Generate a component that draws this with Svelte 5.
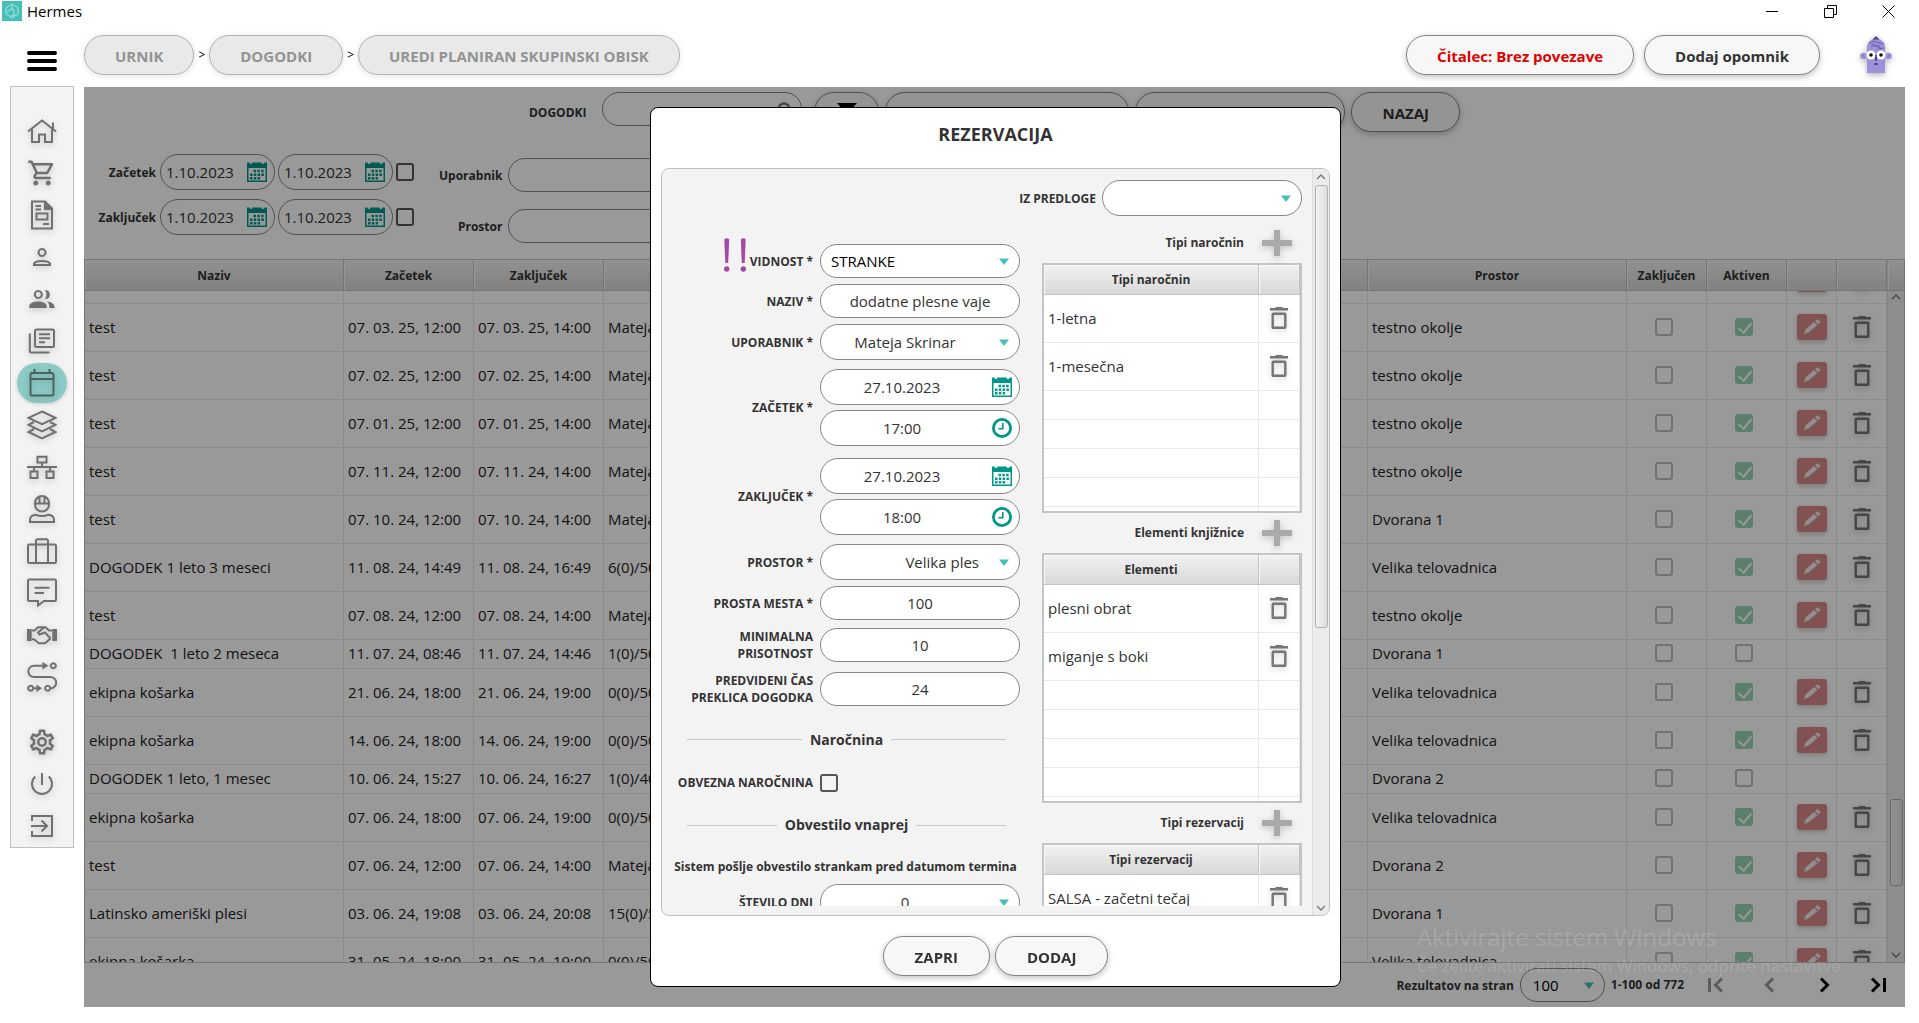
<script lang="ts">
	import { onMount } from 'svelte';

	type Icon = {
		label: string,
		box?: number,
		stroke?: string,
		fill?: string,
		active?: boolean,
		gap?: boolean,
	}

	const menu: Icon[] = [
		{ label: 'Domov', stroke: 'M1 15.5L15 4.5L29 15.5M5 13.5V26H12V18.5H18V26H25V13.5M26 12.5V6.5' },
		{ label: 'Blagajna', box: 24, fill: 'M15.55 13c.75 0 1.41-.41 1.75-1.03l3.58-6.49A.996.996 0 0 0 20.01 4H5.21l-.94-2H1v2h2l3.6 7.59-1.35 2.44C4.52 15.37 5.48 17 7 17h12v-2H7l1.1-2h7.45zM6.16 6h12.15l-2.76 5H8.53L6.16 6zM7 18c-1.1 0-1.99.9-1.99 2S5.9 22 7 22s2-.9 2-2-.9-2-2-2zm10 0c-1.1 0-1.99.9-1.99 2s.89 2 1.99 2 2-.9 2-2-.9-2-2-2z' },
		{ label: 'Dokumenti', stroke: 'M5 1.5H18L25 8.5V28.5H5ZM9.500 13.500H20.500V19.500H9.500ZM8.500 6H14M8.500 9.500H14M16 24H22', fill: 'M17 1L26 10H17Z' },
		{ label: 'Oseba', stroke: 'M15 7a3.500 3.500 0 1 0 .01 0M7 23V21.500C9 18 21 18 23 21.500V23Z' },
		{ label: 'Stranke', stroke: 'M11.300 7a3.500 3.500 0 1 0 .01 0', fill: 'M2.300 24V21.500C4 16 18 16 19.700 21.500V24ZM18 6C24.500 5 24.500 16 18 15C20 12 20 9 18 6ZM20 17.500C24 18 27.700 19.500 27.700 24H22.500C22.500 21 22 19 20 17.500Z' },
		{ label: 'Knjižnica', stroke: 'M9.500 3.500H25.500A1.500 1.500 0 0 1 27 5V19.500A1.500 1.500 0 0 1 25.500 21H9.500A1.500 1.500 0 0 1 8 19.500V5A1.500 1.500 0 0 1 9.500 3.500ZM2.800 7.500V24.500A1.500 1.500 0 0 0 4.300 26.500H22.500M12 8.300H23M12 12.300H23M12 16.300H18' },
		{ label: 'Urnik', active: true, stroke: 'M5 5H25A1.500 1.500 0 0 1 26.500 6.500V26A1.500 1.500 0 0 1 25 27.500H5A1.500 1.500 0 0 1 3.500 26V6.500A1.500 1.500 0 0 1 5 5ZM3.500 11H26.500M7.500 1V6M22.500 1V6' },
		{ label: 'Sloji', stroke: 'M15 1.500L28.500 7.800L15 14.200L1.500 7.800ZM7 12L1.500 14.800L15 21.300L28.500 14.800L23 12M7 19L1.500 22L15 28.500L28.500 22L23 19' },
		{ label: 'Struktura', stroke: 'M10.500 4.800H19.500V10.500H10.500ZM15 10.500V15M0 15H30M7 15V19M23 15V19M3.500 19.500H10.500V26H3.500ZM19.500 19.500H26.500V26H19.500Z' },
		{ label: 'Zaposleni', stroke: 'M15 2A7 7 0 0 1 22 9V10.500A7 7 0 0 1 8 10.500V9A7 7 0 0 1 15 2ZM7 9.500H23M12.500 2.500V9M17.500 2.500V9M3 28V26C3 22.500 6 21 9 20.800C12 22.300 18 22.300 21 20.800C24 21 27 22.500 27 26V28Z' },
		{ label: 'Oprema', stroke: 'M2.500 8.500H27.500A1.300 1.300 0 0 1 29 10V25.500A1.500 1.500 0 0 1 27.500 27H2.500A1.500 1.500 0 0 1 1 25.500V10A1.300 1.300 0 0 1 2.500 8.500ZM9 27V5A1.500 1.500 0 0 1 10.500 3.300H19.500A1.500 1.500 0 0 1 21 5V27' },
		{ label: 'Sporočila', stroke: 'M2.500 1.500H27.500A1.300 1.300 0 0 1 29 3V21.500A1.500 1.500 0 0 1 27.500 23H17L11 27.500V23H2.500A1.500 1.500 0 0 1 1 21.500V3A1.300 1.300 0 0 1 2.500 1.500ZM7.500 9.800H22.500M7.500 15H17' },
		{ label: 'Partnerji', stroke: 'M5 10.500H7.500L11 7.300H18.500L22 10.500H25M5 19.300H7L12 23.300H18L23.500 18.500M17 7.500L11 12.500L12.500 14.500L18 12.500L23.500 18.500', fill: 'M0 9H4.700V21H0ZM25.300 9H30V21H25.300Z' },
		{ label: 'Procesi', stroke: 'M17 3.700H7A5.600 5.600 0 0 0 7 15H23A5.600 5.600 0 0 1 24 26.300M26.300 1.200a2.500 2.500 0 1 0 .01 0M3.700 23.800a2.500 2.500 0 1 0 .01 0M20.700 23.800a2.500 2.500 0 1 0 .01 0M6 26.300H11', fill: 'M15.500 0L21.500 3.700L15.500 7.400ZM9.500 22.600L15 26.300L9.500 30Z' },
		{ label: 'Nastavitve', gap: true, box: 24, fill: 'M12,8A4,4 0 0,1 16,12A4,4 0 0,1 12,16A4,4 0 0,1 8,12A4,4 0 0,1 12,8M12,10A2,2 0 0,0 10,12A2,2 0 0,0 12,14A2,2 0 0,0 14,12A2,2 0 0,0 12,10M10,22C9.75,22 9.54,21.82 9.5,21.58L9.13,18.93C8.5,18.68 7.96,18.34 7.44,17.94L4.95,18.95C4.73,19.03 4.46,18.95 4.34,18.73L2.34,15.27C2.21,15.05 2.27,14.78 2.46,14.63L4.57,12.97L4.5,12L4.57,11L2.46,9.37C2.27,9.22 2.21,8.95 2.34,8.73L4.34,5.27C4.46,5.05 4.73,4.96 4.95,5.05L7.44,6.05C7.96,5.66 8.5,5.32 9.13,5.07L9.5,2.42C9.54,2.18 9.75,2 10,2H14C14.25,2 14.46,2.18 14.5,2.42L14.87,5.07C15.5,5.32 16.04,5.66 16.56,6.05L19.05,5.05C19.27,4.96 19.54,5.05 19.66,5.27L21.66,8.73C21.79,8.95 21.73,9.22 21.54,9.37L19.43,11L19.5,12L19.43,13L21.54,14.63C21.73,14.78 21.79,15.05 21.66,15.27L19.66,18.73C19.54,18.95 19.27,19.04 19.05,18.95L16.56,17.95C16.04,18.34 15.5,18.68 14.87,18.93L14.5,21.58C14.46,21.82 14.25,22 14,22H10M11.25,4L10.88,6.61C9.68,6.86 8.62,7.5 7.85,8.39L5.44,7.35L4.69,8.65L6.8,10.2C6.4,11.37 6.4,12.64 6.8,13.8L4.68,15.36L5.43,16.66L7.86,15.62C8.63,16.5 9.68,17.14 10.87,17.38L11.24,20H12.76L13.13,17.39C14.32,17.14 15.37,16.5 16.14,15.62L18.57,16.66L19.32,15.36L17.2,13.81C17.6,12.64 17.6,11.37 17.2,10.2L19.31,8.65L18.56,7.35L16.15,8.39C15.38,7.5 14.32,6.86 13.12,6.62L12.75,4H11.25Z' },
		{ label: 'Izklop', stroke: 'M8.300 7.500A10 10 0 1 0 21.700 7.500M15 4V16' },
		{ label: 'Odjava', stroke: 'M5 10V5H25V25H5V20M4 15H19.500M14.500 9.500L20 15L14.500 20.500' },
	]

	const crumbs = ['URNIK', 'DOGODKI', 'UREDI PLANIRAN SKUPINSKI OBISK']

	/** name, start, end, attendees, room, can be edited */
	type Event = [string, string, string, string, string, boolean]

	const events: Event[] = [
		['test', '07. 04. 25, 12:00', '07. 04. 25, 14:00', 'Mateja Skrinar', 'testno okolje', true],
		['test', '07. 03. 25, 12:00', '07. 03. 25, 14:00', 'Mateja Skrinar', 'testno okolje', true],
		['test', '07. 02. 25, 12:00', '07. 02. 25, 14:00', 'Mateja Skrinar', 'testno okolje', true],
		['test', '07. 01. 25, 12:00', '07. 01. 25, 14:00', 'Mateja Skrinar', 'testno okolje', true],
		['test', '07. 11. 24, 12:00', '07. 11. 24, 14:00', 'Mateja Skrinar', 'testno okolje', true],
		['test', '07. 10. 24, 12:00', '07. 10. 24, 14:00', 'Mateja Skrinar', 'Dvorana 1', true],
		['DOGODEK 1 leto 3 meseci', '11. 08. 24, 14:49', '11. 08. 24, 16:49', '6(0)/50', 'Velika telovadnica', true],
		['test', '07. 08. 24, 12:00', '07. 08. 24, 14:00', 'Mateja Skrinar', 'testno okolje', true],
		['DOGODEK  1 leto 2 meseca', '11. 07. 24, 08:46', '11. 07. 24, 14:46', '1(0)/50', 'Dvorana 1', false],
		['ekipna košarka', '21. 06. 24, 18:00', '21. 06. 24, 19:00', '0(0)/50', 'Velika telovadnica', true],
		['ekipna košarka', '14. 06. 24, 18:00', '14. 06. 24, 19:00', '0(0)/50', 'Velika telovadnica', true],
		['DOGODEK 1 leto, 1 mesec', '10. 06. 24, 15:27', '10. 06. 24, 16:27', '1(0)/40', 'Dvorana 2', false],
		['ekipna košarka', '07. 06. 24, 18:00', '07. 06. 24, 19:00', '0(0)/50', 'Velika telovadnica', true],
		['test', '07. 06. 24, 12:00', '07. 06. 24, 14:00', 'Mateja Skrinar', 'Dvorana 2', true],
		['Latinsko ameriški plesi', '03. 06. 24, 19:08', '03. 06. 24, 20:08', '15(0)/50', 'Dvorana 1', true],
		['ekipna košarka', '31. 05. 24, 18:00', '31. 05. 24, 19:00', '0(0)/50', 'Velika telovadnica', true],
	]

	const lists = [
		{ title: 'Tipi naročnin', head: 'Tipi naročnin', items: ['1-letna', '1-mesečna'] },
		{ title: 'Elementi knjižnice', head: 'Elementi', items: ['plesni obrat', 'miganje s boki'] },
		{ title: 'Tipi rezervacij', head: 'Tipi rezervacij', items: ['SALSA - začetni tečaj'] },
	]

	const filters = [
		{ label: 'Začetek', id: 'start' },
		{ label: 'Zaključek', id: 'end' },
	]

	const terms = [
		{ label: 'ZAČETEK *', id: 'term-start', date: '27.10.2023', time: '17:00' },
		{ label: 'ZAKLJUČEK *', id: 'term-end', date: '27.10.2023', time: '18:00' },
	]

	let eventList: HTMLDivElement

	// the list opens scrolled part of the way into its first row
	onMount(() => (eventList.scrollTop = 35))
</script>

{#snippet trash()}
	<svg class="trash" width="18" height="22" viewBox="0 0 18 22">
		<path d="M5.500 0H12.500V1H18V3.500H0V1H5.500Z" fill="currentColor" />
		<rect x="2.700" y="6.700" width="12.600" height="14" rx="0.500" fill="none" stroke="currentColor" stroke-width="2.400" />
	</svg>
{/snippet}

{#snippet calendar()}
	<svg class="fieldIcon" width="20" height="20" viewBox="0 0 20 20">
		<path d="M0 0.500H2.500A1.500 1.500 0 0 0 5.500 0.500H14.500A1.500 1.500 0 0 0 17.500 0.500H20V20H0ZM1.500 6V18.500H18.500V6Z" fill="#009688" fill-rule="evenodd" />
		<path d="M6.500 9H17.500M3 12.700H17.500M3 16.300H14" stroke="#009688" stroke-width="2.400" stroke-dasharray="2.500 1.300" />
	</svg>
{/snippet}

{#snippet clock()}
	<svg class="fieldIcon" width="20" height="20" viewBox="0 0 20 20">
		<circle cx="10" cy="10" r="8.600" fill="#fff" stroke="#009688" stroke-width="2.800" />
		<path d="M10.800 5V10.800H6.500" fill="none" stroke="#009688" stroke-width="1.600" />
	</svg>
{/snippet}

{#snippet arrow()}
	<svg class="arrow" width="10" height="7" viewBox="0 0 10 7">
		<path d="M0 0.500H10L5 7Z" fill="#45bfb9" />
	</svg>
{/snippet}

{#snippet chevron(down: boolean)}
	<svg width="10" height="6" viewBox="0 0 10 6">
		<path d={down ? 'M1 1L5 5L9 1' : 'M1 5L5 1L9 5'} fill="none" stroke="#777" stroke-width="1.400" />
	</svg>
{/snippet}

<div class="window">
	<div class="titlebar">
		<svg width="20" height="20" viewBox="0 0 20 20">
			<rect width="20" height="20" fill="#45bfb9" />
			<path d="M10 3L16 6.500V13L12 15.500V9L10 8V3L4 7V13L8 15.500L12 13.500M10 8L5 11M8 15.500L10 17L12 15.500" fill="none" stroke="#b9e8e4" stroke-width="0.900" />
		</svg>
		<span>Hermes</span>
		<div class="windowButtons">
			<button aria-label="Pomanjšaj">
				<svg width="13" height="13" viewBox="0 0 13 13"><path d="M0 6.500H12" stroke="#000" /></svg>
			</button>
			<button aria-label="Obnovi">
				<svg width="13" height="13" viewBox="0 0 13 13"><path d="M0.500 3.500H9.500V12.500H0.500ZM3.500 3V0.500H12.500V9.500H10" fill="none" stroke="#000" /></svg>
			</button>
			<button aria-label="Zapri okno">
				<svg width="13" height="13" viewBox="0 0 13 13"><path d="M0.500 0.500L12.500 12.500M12.500 0.500L0.500 12.500" stroke="#000" /></svg>
			</button>
		</div>
	</div>

	<header>
		<button class="burger" aria-label="Meni">
			<svg width="30" height="20" viewBox="0 0 30 20">
				<path d="M2 2H28M2 10H28M2 18H28" stroke="#000" stroke-width="4" stroke-linecap="round" />
			</svg>
		</button>
		<nav class="crumbs">
			{#each crumbs as crumb, i}
				{#if i > 0}<span>&gt;</span>{/if}
				<button class="pill muted">{crumb}</button>
			{/each}
		</nav>
		<div class="headerRight">
			<button class="pill error">Čitalec: Brez povezave</button>
			<button class="pill">Dodaj opomnik</button>
			<svg class="avatar" width="32" height="38" viewBox="0 0 32 38">
				<path d="M7 37V12C7 6 11 3 16 2C21 3 25 6 25 12V37Z" fill="#9c92d8" />
				<path d="M12.500 3.500L16 0L19.500 3.500Z" fill="#4a4183" />
				<circle cx="3.500" cy="20" r="3.300" fill="#9c92d8" />
				<circle cx="28.500" cy="20" r="3.300" fill="#9c92d8" />
				<path d="M2.500 19L4.500 21M29.500 19L27.500 21M9 6L22 13M12 5L24 8M11 10L20 10M18 13L24 12" stroke="#5d53a3" stroke-width="0.800" />
				<circle cx="11" cy="19" r="4.500" fill="#fff" />
				<circle cx="21" cy="19" r="4.500" fill="#fff" />
				<circle cx="11" cy="19" r="1.800" fill="#111" />
				<circle cx="21" cy="19" r="1.800" fill="#111" />
				<path d="M16 19V25M14.500 28H17.500" stroke="#2c2655" stroke-width="1.300" />
			</svg>
		</div>
	</header>

	<div class="body">
		<nav class="sidebar">
			{#each menu as icon}
				<button class:active={icon.active} class:gap={icon.gap} aria-label={icon.label}>
					<svg width="30" height="30" viewBox="0 0 {icon.box ?? 30} {icon.box ?? 30}">
						{#if icon.stroke}
							<path d={icon.stroke} fill="none" stroke="currentColor" stroke-width="2" />
						{/if}
						{#if icon.fill}
							<path d={icon.fill} fill="currentColor" />
						{/if}
					</svg>
				</button>
			{/each}
		</nav>

		<main>
			<div class="toolbar">
				<label for="search">DOGODKI</label>
				<div class="field search">
					<input id="search" type="text" />
					<svg width="18" height="18" viewBox="0 0 18 18">
						<circle cx="8" cy="8" r="5.500" fill="none" stroke="#777" stroke-width="2.500" />
					</svg>
				</div>
				<button class="pill funnel" aria-label="Filter">
					<svg width="20" height="18" viewBox="0 0 20 18"><path d="M0 0H20L12 9V18H8V9Z" fill="#000" /></svg>
				</button>
				<button class="pill create" aria-label="Nov dogodek"></button>
				<button class="pill export" aria-label="Izvoz"></button>
				<button class="pill">NAZAJ</button>
			</div>

			<div class="filters">
				<div class="dates">
					{#each filters as filter}
						<div class="dateRow">
							<label for="{filter.id}-from">{filter.label}</label>
							<div class="field date">
								<input id="{filter.id}-from" type="text" value="1.10.2023" />
								{@render calendar()}
							</div>
							<div class="field date">
								<input aria-label="{filter.label} do" type="text" value="1.10.2023" />
								{@render calendar()}
							</div>
							<input type="checkbox" aria-label={filter.label} />
						</div>
					{/each}
				</div>
				<div class="selects">
					<label for="user">Uporabnik</label>
					<div class="field low"><input id="user" type="text" /></div>
					<label for="room">Prostor</label>
					<div class="field low"><input id="room" type="text" /></div>
				</div>
			</div>

			<div class="events">
				<div class="eventList" bind:this={eventList}>
					<table>
						<colgroup>
							<col class="cName" /><col class="cTime" /><col class="cTime" /><col />
							<col class="cName" /><col class="cFlag" /><col class="cFlag" /><col class="cTool" /><col class="cTool" />
						</colgroup>
						<thead>
							<tr>
								<th>Naziv</th>
								<th>Začetek</th>
								<th>Zaključek</th>
								<th></th>
								<th>Prostor</th>
								<th>Zaključen</th>
								<th>Aktiven</th>
								<th></th>
								<th></th>
							</tr>
						</thead>
						<tbody>
							{#each events as [name, start, end, people, room, editable]}
								<tr class:short={!editable}>
									<td>{name}</td>
									<td>{start}</td>
									<td>{end}</td>
									<td>{people}</td>
									<td>{room}</td>
									<td class="mid flag"><input type="checkbox" aria-label="Zaključen" /></td>
									<td class="mid flag"><input type="checkbox" aria-label="Aktiven" checked={editable} /></td>
									<td class="mid">
										{#if editable}
											<button class="edit" aria-label="Uredi">
												<svg width="18" height="16" viewBox="0 0 18 16">
													<path d="M1 15L2.500 10.500L11 3L14.500 6L5.500 13.500ZM12 2L13.500 0.800Q14.500 0 15.500 0.800L17 2.200Q17.800 3 17 4L15.500 5.200Z" fill="#eee" />
												</svg>
											</button>
										{/if}
									</td>
									<td class="mid">
										{#if editable}
											<button class="bare" aria-label="Izbriši">{@render trash()}</button>
										{/if}
									</td>
								</tr>
							{/each}
						</tbody>
					</table>
				</div>
				<div class="scroll">
					<div class="corner"></div>
					{@render chevron(false)}
					<div class="track"><div class="thumb low"></div></div>
					{@render chevron(true)}
				</div>
			</div>

			<footer>
				<label for="perPage">Rezultatov na stran</label>
				<div class="field perPage">
					<select id="perPage"><option>100</option></select>
					{@render arrow()}
				</div>
				<span>1-100 od 772</span>
				<div class="pager">
					<button class="bare" aria-label="Prva stran" disabled>
						<svg width="16" height="16" viewBox="0 0 16 16"><path d="M1.500 1V15M14 1.500L7.500 8L14 14.500" /></svg>
					</button>
					<button class="bare" aria-label="Prejšnja stran" disabled>
						<svg width="16" height="16" viewBox="0 0 16 16"><path d="M11 1.500L4.500 8L11 14.500" /></svg>
					</button>
					<button class="bare" aria-label="Naslednja stran">
						<svg width="16" height="16" viewBox="0 0 16 16"><path d="M5 1.500L11.500 8L5 14.500" /></svg>
					</button>
					<button class="bare" aria-label="Zadnja stran">
						<svg width="16" height="16" viewBox="0 0 16 16"><path d="M14.500 1V15M2 1.500L8.500 8L2 14.500" /></svg>
					</button>
				</div>
			</footer>

			<div class="overlay">
				<div class="dialog" role="dialog" aria-labelledby="dialogTitle">
					<h1 id="dialogTitle">REZERVACIJA</h1>
					<div class="panel">
						<div class="content">
							<div class="template">
								<label for="template">IZ PREDLOGE</label>
								<div class="field tall">
									<select id="template"><option></option></select>
									{@render arrow()}
								</div>
							</div>

							<div class="columns">
								<div class="form">
									<div class="formRow">
										<div class="flagged">
											<svg width="22" height="34" viewBox="0 0 22 34" fill="#a448a6">
												<path d="M0.300 1.500Q2.700 -1 5.200 1.500L4.200 25H1.300ZM16.800 1.500Q19.300 -1 21.700 1.500L20.700 25H17.800Z" />
												<circle cx="2.700" cy="31" r="2.700" />
												<circle cx="19.300" cy="31" r="2.700" />
											</svg>
											<label for="visibility">VIDNOST *</label>
										</div>
										<div class="field low start">
											<select id="visibility"><option>STRANKE</option></select>
											{@render arrow()}
										</div>
									</div>
									<div class="formRow">
										<label for="name">NAZIV *</label>
										<div class="field low"><input id="name" type="text" value="dodatne plesne vaje" /></div>
									</div>
									<div class="formRow">
										<label for="owner">UPORABNIK *</label>
										<div class="field tall">
											<select id="owner"><option>Mateja Skrinar</option></select>
											{@render arrow()}
										</div>
									</div>
									{#each terms as term}
										<div class="formRow term">
											<label for={term.id}>{term.label}</label>
											<div class="stack">
												<div class="field tall picker">
													<input id={term.id} type="text" value={term.date} />
													{@render calendar()}
												</div>
												<div class="field tall picker">
													<input aria-label="{term.label} ura" type="text" value={term.time} />
													{@render clock()}
												</div>
											</div>
										</div>
									{/each}
									<div class="formRow">
										<label for="place">PROSTOR *</label>
										<div class="field tall end">
											<select id="place"><option>Velika ples</option></select>
											{@render arrow()}
										</div>
									</div>
									<div class="formRow">
										<label for="seats">PROSTA MESTA *</label>
										<div class="field low"><input id="seats" type="text" value="100" /></div>
									</div>
									<div class="formRow double">
										<label for="minimum">MINIMALNA PRISOTNOST</label>
										<div class="field low"><input id="minimum" type="text" value="10" /></div>
									</div>
									<div class="formRow double">
										<label for="cancel">PREDVIDENI ČAS PREKLICA DOGODKA</label>
										<div class="field low"><input id="cancel" type="text" value="24" /></div>
									</div>

									<div class="extra">
										<h2>Naročnina</h2>
										<div class="formRow">
											<label for="mandatory">OBVEZNA NAROČNINA</label>
											<input id="mandatory" type="checkbox" />
										</div>
										<h2>Obvestilo vnaprej</h2>
										<p>Sistem pošlje obvestilo strankam pred datumom termina</p>
									</div>
									<div class="formRow">
										<label for="days">ŠTEVILO DNI</label>
										<div class="field tall">
											<select id="days"><option>0</option></select>
											{@render arrow()}
										</div>
									</div>
								</div>

								<div class="lists">
									{#each lists as list}
										<div class="listTitle">
											<span>{list.title}</span>
											<button class="bare" aria-label="Dodaj: {list.title}">
												<svg width="30" height="26" viewBox="0 0 30 26">
													<path d="M15 0V26M0 13H30" stroke="#aaa" stroke-width="6" />
												</svg>
											</button>
										</div>
										<div class="listBox">
											<table>
												<colgroup><col /><col class="cDelete" /></colgroup>
												<thead>
													<tr><th>{list.head}</th><th></th></tr>
												</thead>
												<tbody>
													{#each list.items as item}
														<tr>
															<td>{item}</td>
															<td class="mid"><button class="bare" aria-label="Odstrani {item}">{@render trash()}</button></td>
														</tr>
													{/each}
													{#each Array(5) as _}
														<tr class="short"><td></td><td></td></tr>
													{/each}
												</tbody>
											</table>
										</div>
									{/each}
								</div>
							</div>
						</div>
						<div class="scroll">
							{@render chevron(false)}
							<div class="track"><div class="thumb"></div></div>
							{@render chevron(true)}
						</div>
					</div>
					<div class="actions">
						<button class="pill">ZAPRI</button>
						<button class="pill">DODAJ</button>
					</div>
				</div>
			</div>

			<div class="watermark">
				<strong>Aktivirajte sistem Windows</strong>
				<span>Če želite aktivirati sistem Windows, odprite nastavitve.</span>
			</div>
		</main>
	</div>
</div>

<style>
	:global(body) {
		background: #fff;
	}

	.window {
		display: flex;
		flex-direction: column;
		height: 100vh;
		min-width: 1200px;
		overflow: hidden;
		font-family: 'Open Sans', 'Noto Sans', sans-serif;
		font-size: 15px;
		line-height: 20px;
		color: #333;
	}

	.window * {
		box-sizing: border-box;
	}

	svg {
		display: block;
		flex: none;
	}

	button,
	input,
	select {
		font: inherit;
		color: inherit;
		margin: 0;
	}

	label {
		font-size: 12px;
		font-weight: 700;
		line-height: 17px;
		text-align: right;
	}

	.bare,
	.burger,
	.windowButtons button {
		border: 0;
		padding: 0;
		background: none;
	}

	/* window frame */
	.titlebar {
		display: flex;
		align-items: center;
		gap: 5px;
		height: 22px;
		padding-left: 2px;
		color: #000;
	}
	.windowButtons {
		display: flex;
		gap: 45px;
		margin-left: auto;
		padding-right: 24px;
	}

	header {
		display: flex;
		align-items: center;
		height: 65px;
		padding: 1px 27px 0 27px;
	}
	.burger {
		margin: 11px 27px 0 0;
	}
	.crumbs {
		display: flex;
		align-items: center;
		gap: 4px;
		font-size: 12px;
		color: #000;
	}
	.headerRight {
		display: flex;
		align-items: center;
		gap: 10px;
		margin-left: auto;
	}
	.avatar {
		margin-left: 30px;
		filter: drop-shadow(0 2px 3px rgba(0, 0, 0, 0.3));
	}

	.pill {
		height: 40px;
		padding: 2px 30px 0;
		border: 1px solid #868686;
		border-radius: 20px;
		background: #f7f7f7;
		box-shadow: 0 2px 6px rgba(0, 0, 0, 0.25);
		font-size: 15px;
		font-weight: 700;
		white-space: nowrap;
	}
	.pill.muted {
		border-color: #b4b4b4;
		background: #e9e9e9;
		box-shadow: 0 1px 6px rgba(0, 0, 0, 0.12);
		color: #939393;
	}
	.pill.error {
		color: #e00000;
	}

	.body {
		display: flex;
		flex: 1;
		align-items: flex-start;
		gap: 10px;
		min-height: 0;
		padding: 0 14px 16px 10px;
	}

	.sidebar {
		display: flex;
		flex-direction: column;
		align-items: center;
		flex: none;
		width: 64px;
		margin-top: -1px;
		padding-top: 23px;
		border: 1px solid #c0c0c0;
		background: #f3f3f3;
	}
	.sidebar button {
		display: flex;
		align-items: center;
		justify-content: center;
		width: 50px;
		height: 40px;
		margin: 1px 0;
		padding: 0;
		border: 0;
		border-radius: 20px;
		background: none;
		color: #707070;
	}
	.sidebar .active {
		background: #8ccac6;
		color: #4a6260;
		box-shadow: 0 1px 4px rgba(0, 0, 0, 0.15);
	}
	.sidebar .gap {
		margin-top: 24px;
	}
	.sidebar svg {
		filter: drop-shadow(0 2px 3px rgba(0, 0, 0, 0.2));
	}

	main {
		position: relative;
		display: flex;
		flex: 1;
		flex-direction: column;
		align-self: stretch;
		min-width: 0;
		padding-top: 5px;
		background: #fff;
	}

	/* fields */
	.field {
		position: relative;
		width: 200px;
		height: 34px;
	}
	.field.tall {
		height: 36px;
	}
	.field input,
	.field select {
		width: 100%;
		height: 100%;
		padding: 0 10px;
		border: 1px solid #868686;
		border-radius: 18px;
		outline: 0;
		appearance: none;
		background: #fff;
		text-align: center;
	}
	.field select {
		padding-right: 40px;
	}
	.field .arrow {
		position: absolute;
		top: 50%;
		right: 11px;
		margin-top: -3px;
	}
	.fieldIcon {
		position: absolute;
		top: 8px;
		right: 8px;
	}
	.field.start select {
		text-align: left;
		color: #000;
	}
	.field.end select {
		text-align: right;
	}
	.field.picker input {
		padding-right: 46px;
	}

	input[type='checkbox'] {
		display: block;
		width: 18px;
		height: 18px;
		border: 2px solid #555;
		border-radius: 3px;
		appearance: none;
	}

	.toolbar {
		display: flex;
		justify-content: center;
		gap: 6px;
		height: 40px;
	}
	.toolbar label {
		align-self: center;
		margin-right: 10px;
	}
	.search {
		margin-right: 6px;
	}
	.search svg {
		position: absolute;
		top: 9px;
		right: 8px;
	}
	.funnel {
		width: 65px;
		padding: 0 22px;
	}
	.create {
		width: 244px;
	}
	.export {
		width: 210px;
	}

	.filters {
		display: flex;
		gap: 25px;
		margin: 22px 0 16px;
		padding-left: 12px;
	}
	.dates {
		display: flex;
		flex-direction: column;
		gap: 9px;
	}
	.dateRow {
		display: flex;
		align-items: center;
		gap: 3px;
	}
	.dateRow label {
		width: 60px;
		margin-right: 1px;
	}
	.date {
		width: 115px;
		height: 36px;
	}
	.date input {
		padding-left: 5px;
		text-align: left;
	}
	.selects {
		display: grid;
		grid-template-columns: auto 200px;
		align-items: center;
		gap: 17px 6px;
		padding-top: 4px;
	}

	/* tables */
	table {
		width: 100%;
		border-spacing: 0;
		table-layout: fixed;
	}
	th,
	td {
		height: 48px;
		padding: 0 4px 2px;
		border-right: 1px solid #e8e8e8;
		border-bottom: 1px solid #e8e8e8;
		overflow: hidden;
		white-space: pre;
		text-align: left;
	}
	.short td {
		height: 29px;
	}
	th,
	.corner {
		height: 31px;
		padding: 1px 4px 0;
		border-right: 1px solid #c4c4c4;
		border-bottom: 1px solid #c4c4c4;
		background: linear-gradient(#f2f2f2, #d8d8d8);
		box-shadow: inset 1px 1px #f8f8f8;
		font-size: 12px;
		text-align: center;
	}
	.mid > * {
		margin: 0 auto;
	}
	.flag {
		padding-right: 10px;
	}
	.bare {
		display: block;
	}
	.trash {
		color: #757575;
		filter: drop-shadow(0 2px 3px rgba(0, 0, 0, 0.2));
	}

	.events {
		display: flex;
		flex: 1;
		min-height: 0;
		border: 1px solid #c4c4c4;
	}
	.eventList {
		flex: 1;
		overflow: hidden;
	}
	.eventList th {
		position: sticky;
		top: 0;
		z-index: 1;
	}
	.eventList tbody {
		color: #222;
	}
	.cName {
		width: 259px;
	}
	.cTime {
		width: 130px;
	}
	.cFlag {
		width: 80px;
	}
	.cTool {
		width: 50px;
	}
	td input[type='checkbox'] {
		border-color: #bcbcbc;
	}
	td input[type='checkbox']:checked {
		border: 0;
		background: #98d4b3;
	}
	td input[type='checkbox']:checked::before {
		content: '';
		display: block;
		width: 6px;
		height: 11px;
		margin: 2px 0 0 6px;
		border: solid #fff;
		border-width: 0 2px 2px 0;
		transform: rotate(40deg);
	}
	.edit {
		display: flex;
		align-items: center;
		justify-content: center;
		width: 30px;
		height: 26px;
		padding: 0;
		border: 0;
		border-radius: 3px;
		background: #d98787;
		box-shadow: 0 2px 5px rgba(0, 0, 0, 0.2);
	}

	.scroll {
		display: flex;
		flex: none;
		flex-direction: column;
		align-items: center;
		width: 17px;
		padding-bottom: 4px;
		border-left: 1px solid #ddd;
		background: #ececec;
	}
	.corner {
		width: 100%;
		margin-bottom: 3px;
		border-right: 0;
	}
	.track {
		display: flex;
		flex: 1;
		flex-direction: column;
		width: 13px;
		margin: 4px 0;
	}
	.thumb {
		flex: none;
		height: 62%;
		border: 1px solid #b0b0b0;
		border-radius: 3px;
		background: linear-gradient(to right, #f4f4f4, #dedede);
	}
	.track .thumb.low {
		height: 87px;
		margin-top: auto;
		margin-bottom: 62px;
	}

	footer {
		display: flex;
		align-items: center;
		gap: 6px;
		height: 44px;
		padding-right: 19px;
		font-size: 12px;
		font-weight: 700;
	}
	footer label {
		margin-left: auto;
	}
	.perPage {
		width: 85px;
		font-size: 15px;
		font-weight: 400;
	}
	.perPage select {
		padding: 0 10px 0 12px;
		color: #000;
		text-align: left;
	}
	.pager {
		display: flex;
		gap: 38px;
		margin-left: 18px;
	}
	.pager path {
		fill: none;
		stroke: #000;
		stroke-width: 3;
	}
	.pager button:disabled path {
		stroke: #999;
	}

	/* reservation dialog */
	.overlay {
		position: absolute;
		inset: 0;
		z-index: 2;
		display: flex;
		justify-content: center;
		padding: 20px 20px 20px 22px;
		background: rgba(0, 0, 0, 0.4);
	}
	.dialog {
		display: flex;
		flex-direction: column;
		width: 38%;
		min-width: 691px;
		padding: 0 10px 10px;
		border: 1px solid #000;
		border-radius: 8px;
		background: #fff;
	}
	h1 {
		margin: 0;
		padding: 14px 0 22px;
		font-size: 18px;
		line-height: 24px;
		text-align: center;
	}
	.panel {
		display: flex;
		flex: 1;
		min-height: 0;
		border: 1px solid #c0c0c0;
		border-radius: 8px;
		overflow: hidden;
		background: #f3f3f3;
	}
	.panel .scroll {
		padding-top: 5px;
	}
	.panel .track {
		margin: 5px 0;
	}
	.content {
		flex: 1;
		margin: 11px 10px 9px 9px;
		overflow: hidden;
	}
	.template {
		display: flex;
		align-items: center;
		justify-content: flex-end;
		gap: 6px;
		margin-bottom: 7px;
	}
	.columns {
		display: grid;
		grid-template-columns: 1fr 260px;
		gap: 22px;
	}
	.form {
		display: flex;
		flex-direction: column;
		gap: 6px;
		padding-top: 21px;
	}
	.formRow {
		display: grid;
		grid-template-columns: 1fr 200px;
		align-items: center;
		gap: 7px;
	}
	.flagged {
		display: flex;
		justify-content: flex-end;
		align-items: center;
		gap: 4px;
	}
	.flagged svg {
		margin-top: -13px;
	}
	.term {
		padding: 3px 0;
	}
	.double {
		padding: 2px 0;
	}
	.stack {
		display: grid;
		gap: 5px;
	}
	.extra {
		display: grid;
		grid-template-rows: 43px 43px 42px 38px;
		margin-bottom: -6px;
		padding-top: 4px;
	}
	h2 {
		display: flex;
		align-items: center;
		gap: 8px;
		margin: 0 14px 0 16px;
		font-size: 14px;
		line-height: 20px;
	}
	h2::before,
	h2::after {
		content: '';
		flex: 1;
		border-top: 1px solid #c8c8c8;
	}
	.extra p {
		margin: 0;
		padding-top: 12px;
		font-size: 12px;
		font-weight: 700;
		line-height: 18px;
		text-align: center;
		white-space: nowrap;
	}

	.listTitle {
		display: flex;
		align-items: center;
		justify-content: flex-end;
		gap: 18px;
		height: 40px;
		padding-right: 10px;
		font-size: 12px;
		font-weight: 700;
	}
	.listTitle svg {
		filter: drop-shadow(0 2px 3px rgba(0, 0, 0, 0.2));
	}
	.listBox {
		height: 250px;
		border: 2px solid #c4c4c4;
		overflow: hidden;
		background: #fff;
	}
	.listBox th {
		height: 30px;
	}
	.cDelete {
		width: 41px;
	}

	.actions {
		display: flex;
		justify-content: center;
		gap: 5px;
		padding-top: 20px;
	}
	.actions .pill {
		padding: 2px 31px 0;
	}

	.watermark {
		position: absolute;
		right: 60px;
		bottom: 29px;
		z-index: 3;
		display: flex;
		flex-direction: column;
		color: rgba(255, 255, 255, 0.14);
		pointer-events: none;
	}
	.watermark strong {
		font-size: 24px;
		font-weight: 400;
		line-height: 34px;
	}
	.watermark span {
		font-size: 17px;
		line-height: 24px;
	}
</style>
